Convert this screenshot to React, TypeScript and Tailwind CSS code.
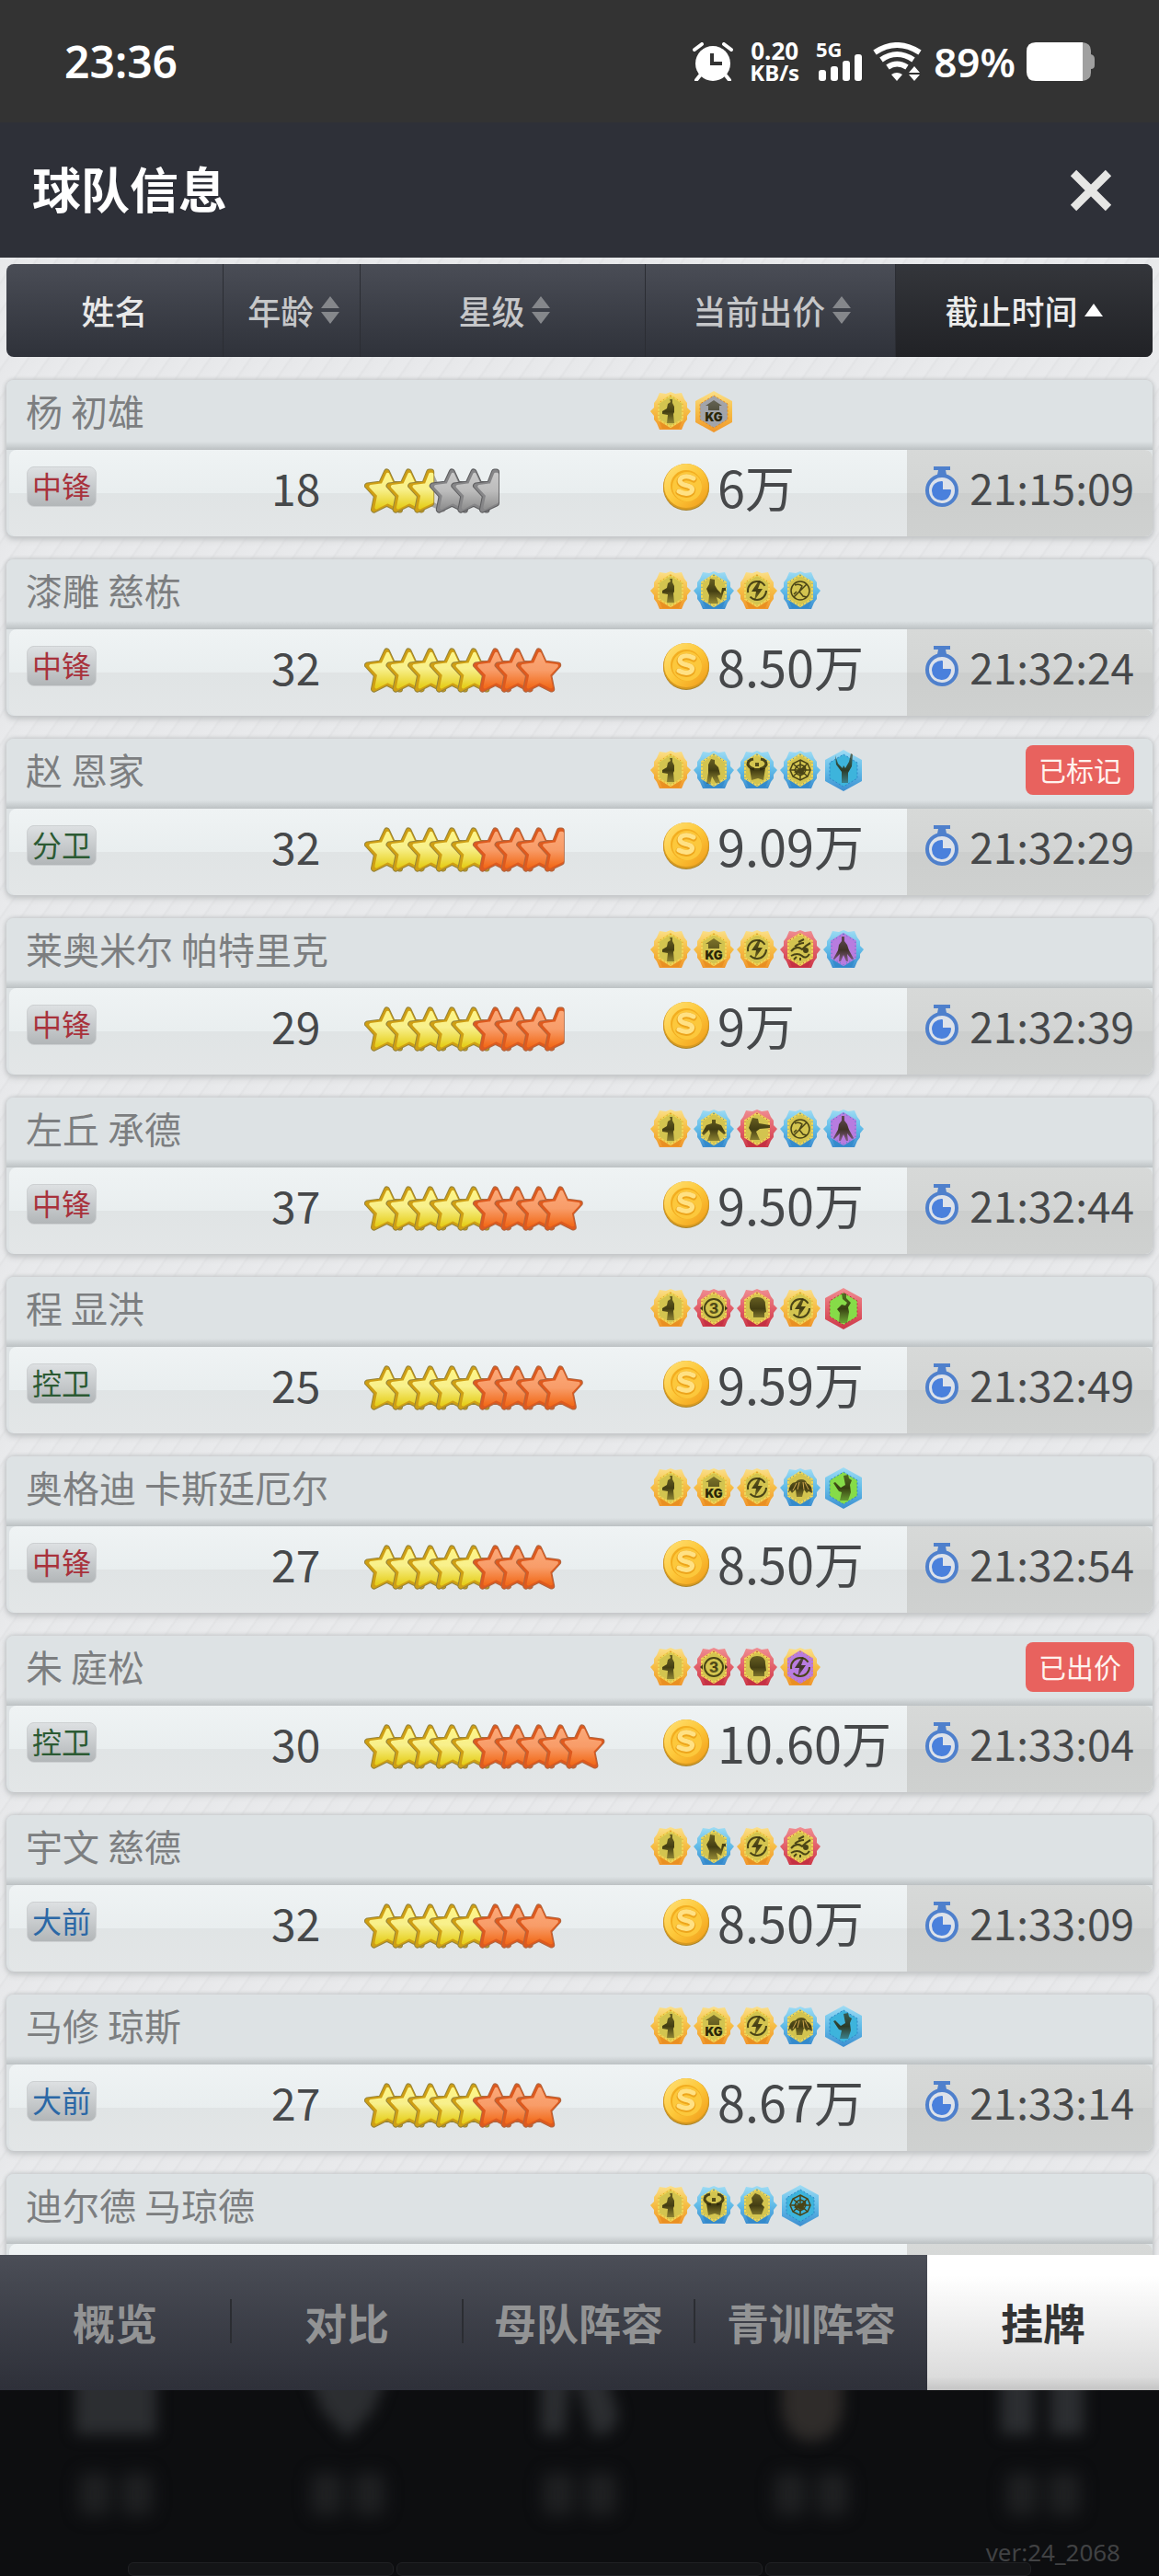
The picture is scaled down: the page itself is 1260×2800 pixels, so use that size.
import { type FC, type ReactNode } from 'react';

type Tone = 'Y' | 'O' | 'G';
type Frame = 'gold' | 'blue' | 'red';
type Fill = 'yellow' | 'grey' | 'cyan' | 'purple' | 'green';

interface BadgeSpec {
  glyph: string;
  frame: Frame;
  fill?: Fill;
  hex?: boolean;
}

interface Offer {
  position: string;
  age: number;
  // one letter per star, lower case for a half star
  stars: string;
  price: string;
  deadline: string;
}

interface Player {
  name: string;
  badges: BadgeSpec[];
  tag?: string;
  offer?: Offer;
}

const guard: BadgeSpec = { glyph: 'guard', frame: 'gold' };
const kg: BadgeSpec = { glyph: 'kg', frame: 'gold' };
const bolt: BadgeSpec = { glyph: 'bolt', frame: 'gold' };
const passer: BadgeSpec = { glyph: 'passer', frame: 'blue' };
const block: BadgeSpec = { glyph: 'block', frame: 'blue' };
const flames: BadgeSpec = { glyph: 'flames', frame: 'red' };
const three: BadgeSpec = { glyph: 'three', frame: 'red' };
const head: BadgeSpec = { glyph: 'head', frame: 'red' };
const bull: BadgeSpec = { glyph: 'bull', frame: 'blue' };
const crowd: BadgeSpec = { glyph: 'crowd', frame: 'blue' };
const stance: BadgeSpec = { glyph: 'stance', frame: 'blue', fill: 'purple' };

const players: Player[] = [
  {
    name: '杨 初雄',
    badges: [guard, { glyph: 'kg', frame: 'gold', fill: 'grey', hex: true }],
    offer: { position: '中锋', age: 18, stars: 'YYyGGg', price: '6万', deadline: '21:15:09' },
  },
  {
    name: '漆雕 慈栋',
    badges: [guard, passer, bolt, block],
    offer: { position: '中锋', age: 32, stars: 'YYYYYOOO', price: '8.50万', deadline: '21:32:24' },
  },
  {
    name: '赵 恩家',
    badges: [
      guard,
      { glyph: 'lean', frame: 'blue' },
      bull,
      { glyph: 'web', frame: 'blue' },
      { glyph: 'reach', frame: 'blue', fill: 'cyan', hex: true },
    ],
    tag: '已标记',
    offer: { position: '分卫', age: 32, stars: 'YYYYYOOOo', price: '9.09万', deadline: '21:32:29' },
  },
  {
    name: '莱奥米尔 帕特里克',
    badges: [guard, kg, bolt, flames, stance],
    offer: { position: '中锋', age: 29, stars: 'YYYYYOOOo', price: '9万', deadline: '21:32:39' },
  },
  {
    name: '左丘 承德',
    badges: [guard, { glyph: 'wide', frame: 'blue' }, { glyph: 'point', frame: 'red' }, block, stance],
    offer: { position: '中锋', age: 37, stars: 'YYYYYOOOO', price: '9.50万', deadline: '21:32:44' },
  },
  {
    name: '程 显洪',
    badges: [guard, three, head, bolt, { glyph: 'shot', frame: 'red', fill: 'green', hex: true }],
    offer: { position: '控卫', age: 25, stars: 'YYYYYOOOO', price: '9.59万', deadline: '21:32:49' },
  },
  {
    name: '奥格迪 卡斯廷厄尔',
    badges: [guard, kg, bolt, crowd, { glyph: 'dunk', frame: 'blue', fill: 'green', hex: true }],
    offer: { position: '中锋', age: 27, stars: 'YYYYYOOO', price: '8.50万', deadline: '21:32:54' },
  },
  {
    name: '朱 庭松',
    badges: [guard, three, head, { glyph: 'bolt', frame: 'gold', fill: 'purple' }],
    tag: '已出价',
    offer: { position: '控卫', age: 30, stars: 'YYYYYOOOOO', price: '10.60万', deadline: '21:33:04' },
  },
  {
    name: '宇文 慈德',
    badges: [guard, passer, bolt, flames],
    offer: { position: '大前', age: 32, stars: 'YYYYYOOO', price: '8.50万', deadline: '21:33:09' },
  },
  {
    name: '马修 琼斯',
    badges: [guard, kg, bolt, crowd, { glyph: 'dunk', frame: 'blue', fill: 'cyan', hex: true }],
    offer: { position: '大前', age: 27, stars: 'YYYYYOOO', price: '8.67万', deadline: '21:33:14' },
  },
  {
    name: '迪尔德 马琼德',
    badges: [guard, bull, { glyph: 'bullBolt', frame: 'blue' }, { glyph: 'web', frame: 'blue', fill: 'cyan', hex: true }],
  },
];

const positionColor: Record<string, string> = {
  中锋: 'text-[#a8323c]',
  分卫: 'text-[#2b5a33]',
  控卫: 'text-[#2b5a33]',
  大前: 'text-[#2b68a6]',
};

const HEX = 'M22 4 L35 12 V30 L22 38 L9 30 V12Z';
const HEX_OUTER = 'M22 -1 L42 10 V33 L22 44 L2 33 V10Z';
const FLOWER = 'M17 2 L22 0 L27 2 L34 1 L37 8 L40 12 L40 17 L44 21 L40 26 L40 30 L37 34 L34 41 H10 L7 34 L4 30 L4 26 L0 21 L4 17 L4 12 L7 8 L10 1Z';

const frameDark: Record<Frame, string> = { gold: '#e58a1c', blue: '#2f86c8', red: '#c02c40' };
const fillColor: Record<Fill, string> = {
  yellow: '#d3c44f',
  grey: '#a2a4aa',
  cyan: '#3db4dc',
  purple: '#b87ce0',
  green: '#86dc48',
};

const glyphs: Record<string, ReactNode> = {
  guard: <path d="M21 8 h3 v4 l2 4 v6 l-1 2 1 10 h-8 l1 -9 -6 -1 v-3 l5 -3 1 -5 3 -2Z" />,
  kg: (
    <>
      <path d="M22 9 L31 15 H28 V20 H16 V15 H13Z" opacity="0.8" />
      <text x="22" y="32" textAnchor="middle" fontSize="13" fontWeight="900" fontFamily="Inter, sans-serif" fill="#2a2608">KG</text>
    </>
  ),
  bolt: (
    <>
      <circle cx="22" cy="21" r="10" fill="none" stroke="currentColor" strokeWidth="2" strokeDasharray="24 5 28 6" />
      <path d="M24 10 L16 22 H21 L19 32 L28 19 H23 L26 11Z" />
    </>
  ),
  passer: <path d="M18 8 l5 1 v6 l3 5 4 4 1 -6 h4 v3 h-2 l-3 10 -5 -3 2 7 H16 l1 -9 -3 -7 3 -5Z" />,
  block: (
    <g fill="none" stroke="currentColor" strokeWidth="1.500">
      <circle cx="22" cy="21" r="10" />
      <path d="M15 28 L29 14 M16 15 q5 -2 8 1 l-3 6 4 5 4 1 M18 22 l-3 3" />
    </g>
  ),
  lean: <path d="M19 9 l4 1 v4 l4 4 2 8 -3 1 3 8 h-5 l-4 -7 -2 8 h-4 l2 -12 v-9Z" />,
  bull: (
    <>
      <path d="M18 9 q-6 1 -6 6 q2 4 7 5 M26 9 q6 1 6 6 q-2 4 -7 5" fill="none" stroke="currentColor" strokeWidth="3" />
      <path d="M20 13 h4 v4 h-4Z" />
      <path d="M14 19 h17 l-2 13 -6 -2 -7 2Z" />
    </>
  ),
  bullBolt: <path d="M20 8 l5 2 4 6 -2 4 3 3 -3 8 H17 l-4 -10 4 -3 -1 -5Z" />,
  web: (
    <g fill="none" stroke="currentColor" strokeWidth="1.500">
      <path d="M22 10 L30 14 L33 21 L30 28 L22 32 L14 28 L11 21 L14 14Z M22 15 L27 17 L28 21 L26 25 L22 27 L18 25 L16 21 L18 17Z" />
      <path d="M22 10 V32 M11 21 H33 M14 14 L30 28 M30 14 L14 28" />
      <path d="M17 23 L27 18 L24 25Z" fill="currentColor" />
    </g>
  ),
  reach: <path d="M13 5 l3 9 5 5 1 -3 2 3 4 -7 2 -9 2 1 -1 13 -4 7 v11 h-7 v-12 l-6 -8Z" />,
  flames: (
    <g fill="none" stroke="currentColor" strokeWidth="2">
      <path d="M12 23 q6 -7 12 -2 q5 -5 9 -7 M12 28 q7 -4 12 0 q4 4 8 -2 M16 18 q5 -4 10 -4 M20 13 l6 -3 M15 32 l3 -3 M22 33 v-3" />
      <circle cx="28" cy="22" r="2" fill="currentColor" />
    </g>
  ),
  stance: <path d="M20 7 h3 v5 l3 4 2 6 5 9 -2 1 -5 -6 1 8 h-2 l-3 -7 -3 7 h-2 l1 -8 -6 6 -1 -1 5 -9 1 -6 3 -4Z" />,
  wide: <path d="M20 11 h4 v4 l6 2 5 9 -2 1 -6 -5 -1 4 3 8 H15 l3 -8 -1 -4 -6 6 -2 -2 5 -9 6 -2Z" />,
  point: <path d="M17 9 l6 1 1 5 12 2 v3 l-11 1 -4 3 4 9 H14 l2 -8 -3 -5 2 -6Z" />,
  three: (
    <>
      <circle cx="22" cy="21" r="10" fill="none" stroke="currentColor" strokeWidth="2" />
      <path d="M10 18 v6 l-3 -3Z M34 18 v6 l3 -3Z" />
      <text x="22" y="27" textAnchor="middle" fontSize="16" fontWeight="800" fontFamily="Inter, sans-serif">3</text>
    </>
  ),
  head: <path d="M14 15 q1 -6 8 -6 q9 0 9 8 l1 8 -2 1 v5 H18 v-6 q-4 -2 -4 -6Z" />,
  crowd: (
    <>
      <path d="M9 27 q1 -12 8 -12 q2 -3 6 -3 q5 0 6 4 q6 2 6 11 l-4 -2 -2 2 -3 -4 -2 8 h-6 l-1 -8 -4 4 -2 -3Z" />
      <path d="M14 24 l4 -8 M19 23 l2 -8 M26 23 l-1 -8 M31 23 l-4 -8" stroke="#d3a84f" strokeWidth="1" />
    </>
  ),
  shot: <path d="M20 5 h5 v5 l5 5 -3 5 1 5 -2 12 h-9 l1 -11 -3 -4 5 -5 4 1 2 -3 -5 -4Z" />,
  dunk: <path d="M22 8 l5 -1 1 4 3 2 -2 5 1 8 -3 9 h-9 l2 -9 -3 -1 -6 -9 2 -1 6 6 5 -3Z" />,
};

// gradients shared by all the small drawings of the page
const SharedDefs: FC = () => (
  <svg className="absolute h-0 w-0" aria-hidden="true">
    <defs>
      <linearGradient id="frame-gold" x1="0" y1="0" x2="0" y2="1">
        <stop offset="0" stopColor="#fbe08a" />
        <stop offset="0.5" stopColor="#f6bd45" />
        <stop offset="1" stopColor="#f0962c" />
      </linearGradient>
      <linearGradient id="frame-blue" x1="0" y1="0" x2="0" y2="1">
        <stop offset="0" stopColor="#9edcf4" />
        <stop offset="0.5" stopColor="#62bce8" />
        <stop offset="1" stopColor="#3c8ed0" />
      </linearGradient>
      <linearGradient id="frame-red" x1="0" y1="0" x2="0" y2="1">
        <stop offset="0" stopColor="#f08e92" />
        <stop offset="0.5" stopColor="#e2606a" />
        <stop offset="1" stopColor="#cc3848" />
      </linearGradient>
      <linearGradient id="glyph" gradientUnits="userSpaceOnUse" x1="0" y1="7" x2="0" y2="36">
        <stop offset="0" stopColor="#332e0c" stopOpacity="0.65" />
        <stop offset="0.5" stopColor="#2a2608" stopOpacity="0.85" />
        <stop offset="1" stopColor="#332e0c" stopOpacity="0.35" />
      </linearGradient>
      <linearGradient id="star-Y" x1="0" y1="0" x2="0" y2="1">
        <stop offset="0" stopColor="#fdf588" />
        <stop offset="0.45" stopColor="#f8f08c" />
        <stop offset="1" stopColor="#e6cf1c" />
      </linearGradient>
      <linearGradient id="star-O" x1="0" y1="0" x2="0" y2="1">
        <stop offset="0" stopColor="#fba878" />
        <stop offset="0.5" stopColor="#f89c68" />
        <stop offset="1" stopColor="#f26c1c" />
      </linearGradient>
      <linearGradient id="star-G" x1="0" y1="0" x2="0" y2="1">
        <stop offset="0" stopColor="#c8c8c8" />
        <stop offset="0.5" stopColor="#bcbcbc" />
        <stop offset="1" stopColor="#929292" />
      </linearGradient>
      <linearGradient id="coin-rim" x1="0" y1="0" x2="1" y2="1">
        <stop offset="0" stopColor="#ffe27a" />
        <stop offset="0.5" stopColor="#fdc83a" />
        <stop offset="1" stopColor="#f09a18" />
      </linearGradient>
    </defs>
  </svg>
);

const Badge: FC<BadgeSpec> = ({ glyph, frame, fill = 'yellow', hex }) => (
  <svg viewBox="0 -1 44 45" className="h-[45px] w-11 shrink-0" aria-hidden="true">
    {hex ? (
      <>
        <path d={HEX_OUTER} fill={`url(#frame-${frame})`} />
        <path d="M22 4 L37 13 V30 L22 39 L7 30 V13Z" fill={fillColor[fill]} stroke={frameDark[frame]} strokeWidth="1" strokeDasharray="2 2" />
      </>
    ) : (
      <>
        <path d={FLOWER} fill={`url(#frame-${frame})`} />
        <path d="M10 33 l3 -3 3 5 3 -3 3 5 3 -5 3 3 3 -5 3 3 -3 7 H13Z" fill={frameDark[frame]} opacity="0.7" />
        <path d={HEX} fill={fillColor[fill]} stroke={fill === 'yellow' ? '#f0d658' : fillColor[fill]} strokeWidth="2" />
        <path d={HEX} fill="none" stroke={frameDark[frame]} strokeWidth="1" strokeDasharray="1 3" />
      </>
    )}
    <g className="text-[#4a4416]" fill="url(#glyph)">
      {glyphs[glyph]}
    </g>
  </svg>
);

const STAR = 'M0 -21 L6 -8 L21 -6 L11 5 L14 20 L0 13 L-14 20 L-11 5 L-21 -6 L-6 -8Z';
const HALF_STAR = 'M1 -21 L1 13 L-14 20 L-11 5 L-21 -6 L-6 -8 L-1 -21Z';

const starEdge: Record<Tone, string> = { Y: '#97843a', O: '#b06640', G: '#5c5c5e' };
const starSide: Record<Tone, string> = { Y: '#cf9f14', O: '#de5a1e', G: '#858587' };

const Star: FC<{ tone: Tone; half?: boolean }> = ({ tone, half }) => {
  const d = half ? HALF_STAR : STAR;
  return (
    <g strokeLinejoin="round">
      <path d={d} fill="none" stroke={starEdge[tone]} strokeWidth="7" />
      <path d={d} fill={starSide[tone]} stroke={starSide[tone]} strokeWidth="5" />
      <path d={d} transform="translate(1 0) scale(0.88)" fill={`url(#star-${tone})`} stroke={`url(#star-${tone})`} strokeWidth="4" />
    </g>
  );
};

const StarRating: FC<{ stars: string }> = ({ stars }) => (
  <svg viewBox="0 0 270 54" className="h-[54px] w-[270px] shrink-0" role="img" aria-label="星级">
    {stars.split('').map((code, i) => {
      const tone = code.toUpperCase() as Tone;
      const half = code !== tone;
      return (
        <g key={i} transform={`translate(${24.5 + i * 23.6} 28)`}>
          {half && tone === 'Y' && <path d={STAR} fill="#dcdcda" stroke="#a4a4a4" strokeWidth="5" strokeLinejoin="round" />}
          <Star tone={tone} half={half} />
        </g>
      );
    })}
  </svg>
);

const Coin: FC = () => (
  <svg viewBox="0 0 52 54" className="h-[54px] w-[52px] shrink-0" aria-hidden="true">
    <circle cx="26" cy="28" r="25" fill="#a8842c" />
    <circle cx="26" cy="27" r="25" fill="#d89a20" />
    <circle cx="26" cy="26" r="24" fill="url(#coin-rim)" />
    <circle cx="26" cy="26" r="17" fill="#f3ae20" />
    <circle cx="27" cy="27" r="16" fill="#fcc83c" />
    <path d="M34 19 Q27 15 21 18 Q16 23 24 26 Q35 28 32 33 Q27 38 18 33" fill="none" stroke="#eda51c" strokeWidth="7" strokeLinecap="round" />
    <path d="M34 18 Q27 14 21 17 Q16 22 24 25 Q35 27 32 32 Q27 37 18 32" fill="none" stroke="#ffe184" strokeWidth="5" strokeLinecap="round" />
  </svg>
);

const Timer: FC = () => (
  <svg viewBox="0 0 38 46" className="h-[46px] w-[38px] shrink-0" aria-hidden="true">
    <path d="M10 1 H28 V5 H23 L24 10 H14 L15 5 H10Z" fill="#4f80cc" />
    <circle cx="19" cy="27" r="16" fill="#dde2ea" stroke="#4f80cc" strokeWidth="4" />
    <path d="M19 18 V27 H28 A9.500 9.500 0 1 1 19 18Z" fill="#4a80dc" stroke="#4a80dc" strokeWidth="2" strokeLinejoin="round" />
  </svg>
);

const SortArrows: FC = () => (
  <svg viewBox="0 0 20 32" className="h-8 w-5" fill="#85878b" aria-hidden="true">
    <path d="M10 1 L20 14 H0Z M0 18 H20 L10 31Z" />
  </svg>
);

const StatusBar: FC = () => (
  <div className="flex h-[133px] shrink-0 items-center justify-between bg-[#333333] px-[70px] font-['Noto_Sans',sans-serif] text-white">
    <span className="text-[48px] leading-[50px] font-semibold">23:36</span>
    <div className="flex items-center">
      <svg viewBox="0 0 44 42" className="h-[42px] w-11" aria-hidden="true">
        <circle cx="22" cy="23" r="19" fill="#fff" />
        <path d="M2 8 L10 2 M42 8 L34 2" stroke="#fff" strokeWidth="4" strokeLinecap="round" />
        <path d="M8 36 L4 41 M36 36 L40 41" stroke="#fff" strokeWidth="4" strokeLinecap="round" />
        <path d="M21 12 V23 H32" fill="none" stroke="#333" strokeWidth="4" />
      </svg>
      <div className="ml-[18px] flex flex-col items-center font-bold">
        <span className="text-[26px] leading-[24px]">0.20</span>
        <span className="text-[24px] leading-[24px]">KB/s</span>
      </div>
      <svg viewBox="0 -10 50 62" className="ml-[18px] h-[62px] w-[50px]" fill="#fff" aria-label="5G" role="img">
        <text x="0" y="16" fontSize="22" fontWeight="700">5G</text>
        <rect x="3" y="30" width="8" height="12" rx="3" />
        <rect x="16" y="26" width="8" height="16" rx="3" />
        <rect x="29" y="20" width="8" height="22" rx="3" />
        <rect x="42" y="13" width="8" height="29" rx="3" />
      </svg>
      <svg viewBox="0 0 54 42" className="ml-3 h-[42px] w-[54px]" aria-hidden="true">
        <g fill="none" stroke="#fff" strokeWidth="6">
          <path d="M2 11 Q26 -5 51 11" />
          <path d="M9 19 Q26 7 44 19" />
          <path d="M16 27 Q26 20 37 27" />
        </g>
        <path d="M20 35 Q26 31 32 35 L26 42Z" fill="#fff" />
        <path d="M45 26 L51 33 H39Z M39 35 H51 L45 42Z" fill="#fff" />
      </svg>
      <span className="ml-3 text-[44px] leading-[50px] font-semibold">89%</span>
      <svg viewBox="0 0 74 42" className="ml-3 h-[42px] w-[74px]" aria-hidden="true">
        <path d="M61 0 Q70 1 70 9 V13 Q74 14 74 18 V25 Q74 29 70 29 V33 Q70 41 61 42Z" fill="#a0a0a0" />
        <path d="M10 0 H61 V42 H10 Q0 42 0 32 V10 Q0 0 10 0Z" fill="#fff" />
      </svg>
    </div>
  </div>
);

const columns = ['年龄', '星级', '当前出价'];

const TableHead: FC = () => (
  <thead className="block px-[7px]">
    <tr className="grid h-[101px] grid-cols-[236fr_149fr_309fr_272fr_279fr] overflow-hidden rounded-lg bg-linear-to-b from-[#4a4d56] to-[#2f323a] text-[36px] leading-[44px] font-medium">
      <th scope="col" className="flex items-center justify-center border-r border-[#2b2d33] pb-[2px] font-medium text-[#e8e8e8]">
        姓名
      </th>
      {columns.map((label) => (
        <th key={label} scope="col" className="flex border-r border-[#2b2d33] pb-[2px] font-medium text-[#c6c7c9]">
          <button type="button" className="flex flex-1 items-center justify-center gap-2 pl-1">
            {label}
            <SortArrows />
          </button>
        </th>
      ))}
      <th scope="col" aria-sort="ascending" className="flex bg-linear-to-b from-[#34363b] to-[#212226] pb-[2px] font-medium text-[#ececec]">
        <button type="button" className="flex flex-1 items-center justify-center gap-2">
          截止时间
          <svg viewBox="0 0 20 14" className="h-[14px] w-5" fill="#fff" aria-hidden="true">
            <path d="M10 0 L20 14 H0Z" />
          </svg>
        </button>
      </th>
    </tr>
  </thead>
);

const PlayerCard: FC<{ player: Player }> = ({ player }) => {
  const { name, badges, tag, offer } = player;
  return (
    <tbody className="mx-[7px] block rounded-lg bg-[#dde2e4] shadow-[0_0_4px_1px_#c3c6c8,0_4px_6px_#c8cacc]">
      <tr className="grid h-[76px] grid-cols-[700fr_546fr] rounded-t-lg bg-[linear-gradient(#dde2e4_88%,#bcc1c3)]">
        <th scope="row" className="flex items-center pb-[10px] pl-[21px] text-[40px] leading-[44px] font-normal text-[#7c7e80]">
          {name}
        </th>
        <td className="flex items-center justify-between pr-5 pb-2">
          <span className="flex gap-[3px]">
            {badges.map((badge, i) => (
              <Badge key={i} {...badge} />
            ))}
          </span>
          {tag && (
            <span className="flex h-[54px] items-center rounded-lg bg-[#e8625e] px-[14px] pb-[2px] text-[30px] leading-[36px] text-[#fff3ee]">
              {tag}
            </span>
          )}
        </td>
      </tr>
      <tr className="ml-[3px] grid h-[94px] grid-cols-[285fr_101fr_324fr_266fr_267fr] overflow-hidden rounded-lg bg-[linear-gradient(#eff3f4,#e9eeef_50%,#e0e4e5_50%,#e3e6e7)] text-[#46484a]">
        <td className="flex items-center pb-[14px] pl-[19px]">
          {offer && (
            <span className={`flex h-11 w-[76px] items-center justify-center rounded-lg border border-[#cdd0d2] bg-linear-to-b from-[#dde0e2] to-[#b2b6b8] pb-1 text-[32px] leading-[36px] ${positionColor[offer.position]}`}>
              {offer.position}
            </span>
          )}
        </td>
        <td className="flex items-center pb-[14px] text-[48px] leading-[52px]">{offer?.age}</td>
        <td className="flex items-center pb-[6px]">{offer && <StarRating stars={offer.stars} />}</td>
        <td className="flex items-center gap-2 pb-[14px] text-[54px] leading-[56px] whitespace-nowrap">
          {offer && (
            <>
              <Coin />
              {offer.price}
            </>
          )}
        </td>
        <td className="flex items-center justify-between bg-[linear-gradient(#d7d9d8,#d3d5d4_50%,#cccecd_50%,#cfd1d0)] pr-5 pb-[14px] pl-[19px] text-[46px] leading-[52px]">
          {offer && (
            <>
              <Timer />
              <time>{offer.deadline}</time>
            </>
          )}
        </td>
      </tr>
    </tbody>
  );
};

const tabs = ['概览', '对比', '母队阵容', '青训阵容', '挂牌'];

const TabBar: FC = () => (
  <nav className="grid h-[147px] shrink-0 grid-cols-5 bg-linear-to-b from-[#4b4e57] to-[#2e3039] text-[46px] leading-[54px] font-bold">
    {tabs.map((tab, i) =>
      tab === '挂牌' ? (
        <button
          key={tab}
          type="button"
          aria-current="page"
          className="bg-[linear-gradient(#ffffff_15%,#dcdcdc_90%,#c4c4c4)] pb-1 text-[#333333]"
        >
          {tab}
        </button>
      ) : (
        <button key={tab} type="button" className="flex items-center pb-1 text-[#929394]">
          <span className="flex-1 text-center">{tab}</span>
          {i < 3 && <span className="h-12 w-[2px] bg-[#2b2d32]" />}
        </button>
      ),
    )}
  </nav>
);

// dimmed game menu that shows through below the panel
const menuShapes = [
  'M6 -20 H94 V48 H6Z',
  'M6 -20 H94 L78 22 L50 52 L22 22Z',
  'M8 -20 H40 L34 48 H8Z M44 -20 H78 L92 26 Q90 52 64 48Z',
  'M18 -20 H84 V24 Q78 54 50 56 Q24 54 18 24Z',
  'M4 -20 H40 V48 H4Z M58 -20 H94 V48 H58Z',
];

const BackdropMenu: FC = () => (
  <footer className="flex h-[202px] shrink-0 flex-col overflow-hidden bg-[#0d0e10]">
    <div className="grid h-[165px] shrink-0 grid-cols-5">
      {menuShapes.map((d, i) => (
        <svg key={i} viewBox="0 0 100 165" className="mx-auto h-[165px] w-[100px] overflow-visible" aria-hidden="true">
          <path d={d} className="blur-[8px]" fill={i === 3 ? '#2f2c2a' : '#2c2e31'} />
          <g className="blur-[9px]" fill="#1f2022">
            <rect x="10" y="90" width="34" height="46" rx="8" />
            <rect x="56" y="90" width="34" height="46" rx="8" />
          </g>
        </svg>
      ))}
    </div>
    <p className="pr-[42px] text-right font-['Noto_Sans',sans-serif] text-[26px] leading-[22px] text-[#414244]">ver:24_2068</p>
    <div className="grid grow grid-cols-[290fr_400fr_290fr] gap-[3px] px-[11%]">
      <span className="rounded-md border border-[#202124] bg-[#141517]" />
      <span className="rounded-md border border-[#202124] bg-[#141517]" />
      <span className="rounded-md border border-[#202124] bg-[#141517]" />
    </div>
  </footer>
);

const App: FC = () => {
  return (
    <div className="flex h-screen flex-col overflow-hidden font-['Noto_Sans_CJK_SC',sans-serif]">
      <SharedDefs />
      <StatusBar />
      <header className="flex h-[147px] shrink-0 items-center justify-between bg-[#2e3038] pr-[50px] pl-[35px]">
        <h1 className="pb-[5px] text-[53px] leading-[60px] font-bold text-white">球队信息</h1>
        <button type="button" aria-label="关闭">
          <svg viewBox="0 0 48 48" className="h-12 w-12" aria-hidden="true">
            <path d="M5 5 L43 43 M43 5 L5 43" stroke="#e6e6e4" strokeWidth="9" />
          </svg>
        </button>
      </header>
      <main className="min-h-0 flex-1 overflow-y-auto bg-[repeating-linear-gradient(125deg,#e7e8ea_0px,#e9eaec_14px,#e2e3e5_16px,#e7e8ea_18px)] pt-[7px] [scrollbar-width:none]">
        <table className="flex flex-col gap-[25px]">
          <TableHead />
          {players.map((player) => (
            <PlayerCard key={player.name} player={player} />
          ))}
        </table>
      </main>
      <TabBar />
      <BackdropMenu />
    </div>
  );
};

export default App;
